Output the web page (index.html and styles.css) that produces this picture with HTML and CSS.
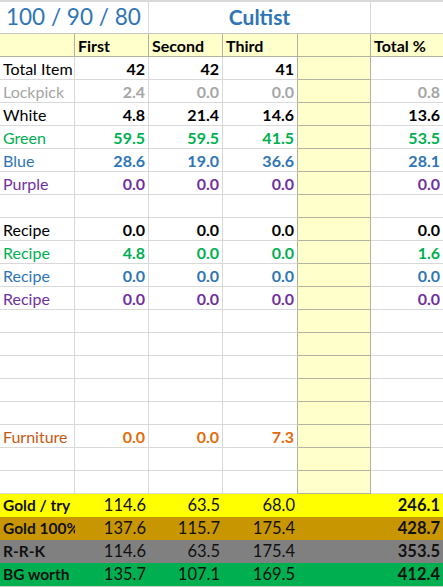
FILE: index.html
```html
<!DOCTYPE html>
<html>
<head>
<meta charset="utf-8">
<link rel="stylesheet" href="styles.css">
</head>
<body>
<div class="sheet">
  <div class="row title-row">
    <div class="cell span2 title-left">100 / 90 / 80</div>
    <div class="cell span3 title-center">Cultist</div>
    <div class="cell title-right"></div>
  </div>
  <div class="row head-row">
    <div class="cell note"></div>
    <div class="cell note">First</div>
    <div class="cell note">Second</div>
    <div class="cell note">Third</div>
    <div class="cell note"></div>
    <div class="cell note">Total %</div>
  </div>

  <div class="row black">
    <div class="cell label">Total Item</div>
    <div class="cell num">42</div><div class="cell num">42</div><div class="cell num">41</div>
    <div class="cell note"></div><div class="cell num"></div>
  </div>
  <div class="row gray">
    <div class="cell label">Lockpick</div>
    <div class="cell num">2.4</div><div class="cell num">0.0</div><div class="cell num">0.0</div>
    <div class="cell note"></div><div class="cell num">0.8</div>
  </div>
  <div class="row black">
    <div class="cell label">White</div>
    <div class="cell num">4.8</div><div class="cell num">21.4</div><div class="cell num">14.6</div>
    <div class="cell note"></div><div class="cell num">13.6</div>
  </div>
  <div class="row green">
    <div class="cell label">Green</div>
    <div class="cell num">59.5</div><div class="cell num">59.5</div><div class="cell num">41.5</div>
    <div class="cell note"></div><div class="cell num">53.5</div>
  </div>
  <div class="row blue">
    <div class="cell label">Blue</div>
    <div class="cell num">28.6</div><div class="cell num">19.0</div><div class="cell num">36.6</div>
    <div class="cell note"></div><div class="cell num">28.1</div>
  </div>
  <div class="row purple">
    <div class="cell label">Purple</div>
    <div class="cell num">0.0</div><div class="cell num">0.0</div><div class="cell num">0.0</div>
    <div class="cell note"></div><div class="cell num">0.0</div>
  </div>
  <div class="row">
    <div class="cell"></div><div class="cell"></div><div class="cell"></div><div class="cell"></div>
    <div class="cell note"></div><div class="cell"></div>
  </div>
  <div class="row black">
    <div class="cell label">Recipe</div>
    <div class="cell num">0.0</div><div class="cell num">0.0</div><div class="cell num">0.0</div>
    <div class="cell note"></div><div class="cell num">0.0</div>
  </div>
  <div class="row green">
    <div class="cell label">Recipe</div>
    <div class="cell num">4.8</div><div class="cell num">0.0</div><div class="cell num">0.0</div>
    <div class="cell note"></div><div class="cell num">1.6</div>
  </div>
  <div class="row blue">
    <div class="cell label">Recipe</div>
    <div class="cell num">0.0</div><div class="cell num">0.0</div><div class="cell num">0.0</div>
    <div class="cell note"></div><div class="cell num">0.0</div>
  </div>
  <div class="row purple">
    <div class="cell label">Recipe</div>
    <div class="cell num">0.0</div><div class="cell num">0.0</div><div class="cell num">0.0</div>
    <div class="cell note"></div><div class="cell num">0.0</div>
  </div>
  <div class="row"><div class="cell"></div><div class="cell"></div><div class="cell"></div><div class="cell"></div><div class="cell note"></div><div class="cell"></div></div>
  <div class="row"><div class="cell"></div><div class="cell"></div><div class="cell"></div><div class="cell"></div><div class="cell note"></div><div class="cell"></div></div>
  <div class="row"><div class="cell"></div><div class="cell"></div><div class="cell"></div><div class="cell"></div><div class="cell note"></div><div class="cell"></div></div>
  <div class="row"><div class="cell"></div><div class="cell"></div><div class="cell"></div><div class="cell"></div><div class="cell note"></div><div class="cell"></div></div>
  <div class="row"><div class="cell"></div><div class="cell"></div><div class="cell"></div><div class="cell"></div><div class="cell note"></div><div class="cell"></div></div>
  <div class="row orange">
    <div class="cell label">Furniture</div>
    <div class="cell num">0.0</div><div class="cell num">0.0</div><div class="cell num">7.3</div>
    <div class="cell note"></div><div class="cell num"></div>
  </div>
  <div class="row"><div class="cell"></div><div class="cell"></div><div class="cell"></div><div class="cell"></div><div class="cell note"></div><div class="cell"></div></div>
  <div class="row"><div class="cell"></div><div class="cell"></div><div class="cell"></div><div class="cell"></div><div class="cell note"></div><div class="cell"></div></div>

  <div class="row sum yellow">
    <div class="cell label">Gold / try</div>
    <div class="cell num">114.6</div><div class="cell num">63.5</div><div class="cell num">68.0</div>
    <div class="cell"></div><div class="cell num total">246.1</div>
  </div>
  <div class="row sum gold">
    <div class="cell label">Gold 100%</div>
    <div class="cell num">137.6</div><div class="cell num">115.7</div><div class="cell num">175.4</div>
    <div class="cell"></div><div class="cell num total">428.7</div>
  </div>
  <div class="row sum grey">
    <div class="cell label">R-R-K</div>
    <div class="cell num">114.6</div><div class="cell num">63.5</div><div class="cell num">175.4</div>
    <div class="cell"></div><div class="cell num total">353.5</div>
  </div>
  <div class="row sum bgreen">
    <div class="cell label">BG worth</div>
    <div class="cell num">135.7</div><div class="cell num">107.1</div><div class="cell num">169.5</div>
    <div class="cell"></div><div class="cell num total">412.4</div>
  </div>
</div>
</body>
</html>
```

FILE: styles.css
```css
* { box-sizing: border-box; }
html, body { margin: 0; padding: 0; background: #ffffff; }
body {
  font-family: Lato, "Liberation Sans", sans-serif;
  font-size: 16px;
  color: #000;
}
.sheet {
  width: 443px;
  border-top: 2px solid #d9d9d9;
  border-bottom: 1px solid #d0d0d0;
  overflow: hidden;
}
.row {
  display: grid;
  grid-template-columns: 75px 74px 74px 75px 73px 72px;
  height: 23px;
}
.cell {
  border-right: 1px solid #d9d9d9;
  border-bottom: 1px solid #d9d9d9;
  padding: 0 3px;
  line-height: 23px;
  white-space: nowrap;
  overflow: hidden;
}
.row > .cell:last-child { border-right: none; }

.title-row { height: 32px; grid-template-columns: 149px 222px 72px; }
.title-row .cell {
  border-bottom-color: #c4c4c4;
  line-height: 30px;
  color: #2e75b6;
  font-size: 22.5px;
}
.title-left { padding-left: 6px; }
.title-center { text-align: center; font-weight: 700; font-size: 21px !important; }

.note {
  background: #ffffcc;
  border-right-color: #b2b2a0;
  border-bottom-color: #b2b2a0;
}
.row > .cell:nth-child(4) { border-right-color: #b2b2a0; }
.head-row .cell { font-weight: 700; border-color: #b2b2a0; }

.label { font-weight: 400; }
.num { text-align: right; font-weight: 700; }

.black { color: #000; }
.gray { color: #a6a6a6; }
.green { color: #00b050; }
.blue { color: #2e75b6; }
.purple { color: #7030a0; }
.orange { color: #c65911; }
.orange .num { color: #e26b0a; }

.sum { font-size: 16.5px; }
.sum .cell { border: none; color: #111; }
.sum .label { font-weight: 700; font-size: 15.5px; }
.sum .num { font-weight: 400; }
.sum .total { font-weight: 700; }
.yellow { background: #ffff00; }
.gold { background: #c89600; }
.grey { background: #808080; }
.bgreen { background: #00b050; }
```
